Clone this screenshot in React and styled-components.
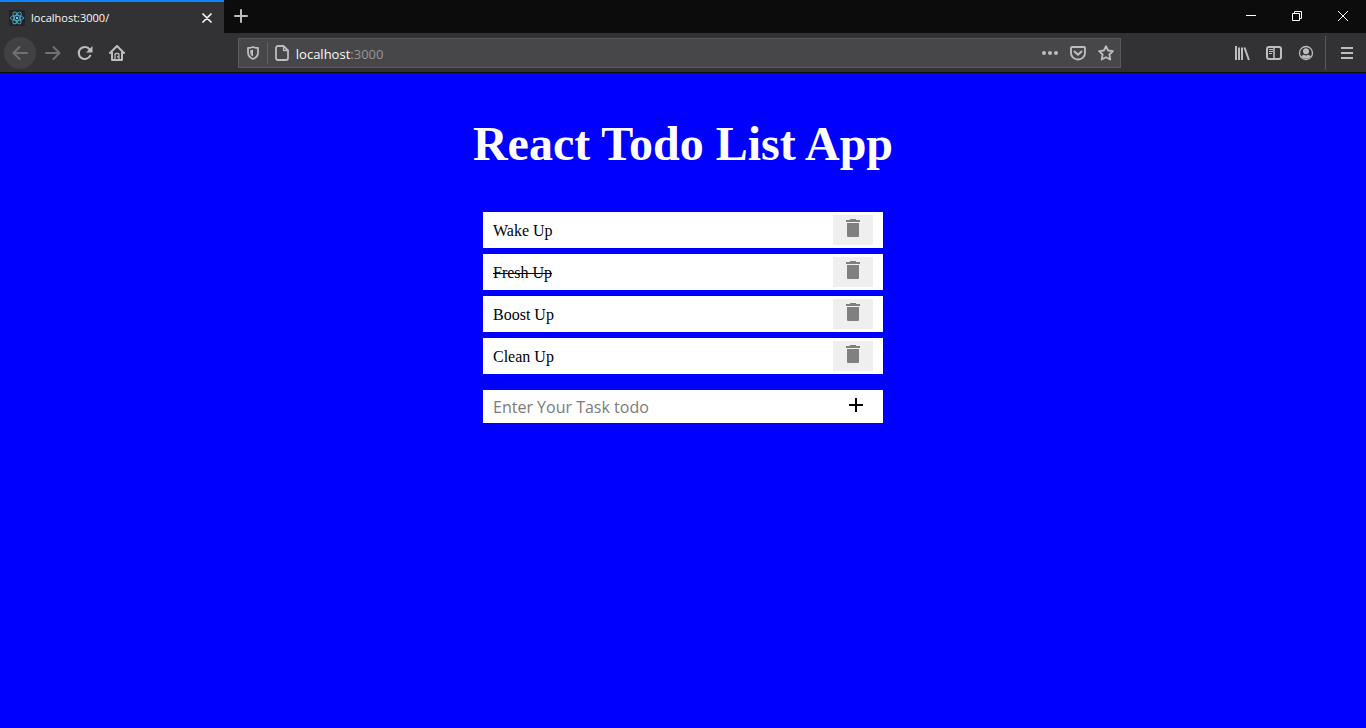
import React from "react";
import styled, { createGlobalStyle } from "styled-components";

const GlobalStyle = createGlobalStyle`
  * { box-sizing: border-box; }
  html, body, #root { height: 100%; }
  body { margin: 0; background: #0000ff; }
  button { border: 0; padding: 0; margin: 0; }
  ul { list-style: none; padding: 0; margin: 0; }
`;

const ui = `"Open Sans", "Noto Sans", sans-serif`;

const Window = styled.div`
  min-height: 100%;
  display: flex;
  flex-direction: column;
`;

const TitleBar = styled.header`
  display: flex;
  height: 33px;
  background: #0c0c0d;
`;

const Tab = styled.div`
  display: flex;
  align-items: center;
  width: 224px;
  padding: 0 8px 0 9px;
  background: #323234;
  border-top: 2px solid #0a84ff;
  color: #f9f9fa;
  font: 11px/16px ${ui};
`;

const TabTitle = styled.span`
  flex: 1;
  margin-left: 6px;
`;

const IconButton = styled.button`
  display: flex;
  flex: none;
  align-items: center;
  justify-content: center;
  width: ${(p) => p.$width || 32}px;
  height: ${(p) => p.$height || 32}px;
  border-radius: ${(p) => (p.$round ? "50%" : "0")};
  background: ${(p) => (p.$round ? "#414143" : "transparent")};
  color: ${(p) => p.$color || "#bdbdbe"};
`;

const WindowControls = styled.div`
  display: flex;
  margin-left: auto;
`;

const Toolbar = styled.nav`
  display: flex;
  align-items: center;
  height: 40px;
  padding: 0 3px 0 4px;
  background: #323234;
  border-bottom: 1px solid #0c0c0d;
`;

const BackSlot = styled.div`
  margin-right: 1px;
`;

const Spacer = styled.div`
  flex: 105 1 0;
`;

const AddressBar = styled.div`
  display: flex;
  flex: 883 1 0;
  min-width: 0;
  align-items: center;
  height: 30px;
  background: #474749;
  border: 1px solid #5a5a5c;
`;

const AddressDivider = styled.span`
  width: 1px;
  height: 22px;
  background: #636365;
`;

const Address = styled.div`
  flex: 1;
  min-width: 0;
  padding-top: 2px;
  color: #96969a;
  font: 13px/20px ${ui};
`;

const Host = styled.span`
  color: #f9f9fa;
`;

const MenuDivider = styled.span`
  width: 1px;
  height: 34px;
  margin: 0 5px 0 3px;
  background: #59595b;
`;

const Page = styled.main`
  flex: 1;
  display: flex;
  flex-direction: column;
  align-items: center;
  padding: 43px 16px 16px;
  background: #0000ff;
  font-family: "Liberation Serif", serif;
`;

const Heading = styled.h1`
  margin: 0 0 41px;
  color: #ffffff;
  font-size: 48px;
  line-height: 55px;
`;

const TodoPanel = styled.section`
  width: 100%;
  max-width: 400px;
`;

const TodoList = styled.ul`
  display: flex;
  flex-direction: column;
  gap: 6px;
`;

const TodoItem = styled.li`
  display: flex;
  align-items: center;
  justify-content: space-between;
  height: 36px;
  padding: 0 10px;
  background: #ffffff;
`;

const TodoText = styled.span`
  padding-top: 2px;
  color: #000000;
  font-size: 16px;
  line-height: 18px;
  text-decoration: ${(p) => (p.$done ? "line-through" : "none")};
`;

const DeleteButton = styled.button`
  display: flex;
  justify-content: center;
  align-items: flex-start;
  width: 40px;
  height: 30px;
  padding-top: 4px;
  background: #efefef;
  color: #808080;
`;

const TodoForm = styled.form`
  display: flex;
  height: 33px;
  margin-top: 16px;
  background: #ffffff;
`;

const TodoInput = styled.input`
  flex: 1;
  min-width: 0;
  padding: 1px 10px 0;
  border: 0;
  outline: 0;
  background: transparent;
  color: #000000;
  font: 16px/20px ${ui};
  &::placeholder { color: #7b7b7b; opacity: 1; }
`;

const AddButton = styled.button`
  display: flex;
  justify-content: center;
  align-items: flex-start;
  width: 40px;
  margin-right: 7px;
  padding-top: 8px;
  background: transparent;
  color: #000000;
`;

const Svg = ({ size = 16, children, ...rest }) => (
  <svg width={size} height={size} viewBox={`0 0 ${size} ${size}`} fill="none"
    stroke="currentColor" strokeWidth="2" strokeLinecap="round"
    strokeLinejoin="round" aria-hidden="true" {...rest}>
    {children}
  </svg>
);

const ReactLogo = () => (
  <Svg stroke="#61dafb" strokeWidth="0.9">
    <rect width="16" height="16" rx="1.5" fill="#20232a" stroke="none" />
    <g opacity="0.75">
      <ellipse cx="8" cy="8" rx="6.6" ry="2.6" />
      <ellipse cx="8" cy="8" rx="6.6" ry="2.6" transform="rotate(60 8 8)" />
      <ellipse cx="8" cy="8" rx="6.6" ry="2.6" transform="rotate(120 8 8)" />
    </g>
    <circle cx="8" cy="8" r="1.2" fill="#61dafb" stroke="none" />
  </Svg>
);

const TabCloseIcon = () => (
  <Svg size={10} strokeWidth="1.7"><path d="M1 1l8 8M9 1L1 9" /></Svg>
);
const NewTabIcon = () => (
  <Svg size={14}><path d="M7 1v12M1 7h12" /></Svg>
);
const MinimizeIcon = () => (
  <Svg size={10} strokeWidth="1" strokeLinecap="butt"><path d="M0 4.5h10" /></Svg>
);
const RestoreIcon = () => (
  <Svg size={10} strokeWidth="1" strokeLinecap="butt" strokeLinejoin="miter">
    <path d="M.5 2.5h7v7h-7zM2.5 2.5v-2h7v7h-2" />
  </Svg>
);
const CloseIcon = () => (
  <Svg size={10} strokeWidth="1" strokeLinecap="butt"><path d="M0 0l10 10M10 0L0 10" /></Svg>
);
const BackIcon = () => (
  <Svg><path d="M15 8H1.5M7.5 2l-6 6 6 6" /></Svg>
);
const ForwardIcon = () => (
  <Svg><path d="M1 8h13.5M8.500 2l6 6-6 6" /></Svg>
);
const ReloadIcon = () => (
  <Svg strokeWidth="2.1">
    <path d="M13.2 10.6a6 6 0 1 1-.6-6.2" />
    <path d="M15.5 1v6.5H9z" fill="currentColor" stroke="none" />
  </Svg>
);
const HomeIcon = () => (
  <Svg>
    <path d="M1 8l7-7 7 7" />
    <path d="M3 7.500V15h10V7.500" />
    <path d="M6 15V9.500a1 1 0 0 1 1-1h2a1 1 0 0 1 1 1V15" strokeWidth="1.300" />
    <rect x="8" y="11" width="1.500" height="1.500" fill="currentColor" stroke="none" />
  </Svg>
);
const ShieldIcon = () => (
  <Svg size={14}>
    <path d="M7 1c1.600.7 3.500 1 5 1v4.500c0 3-1.800 5.200-5 6.500-3.200-1.300-5-3.500-5-6.500V2c1.500 0 3.400-.3 5-1z" strokeWidth="1.800" />
    <path d="M7 3.600v6.800C5.200 9.600 4.300 8.200 4.300 6.400V4.200c1 0 1.900-.2 2.700-.6z" fill="currentColor" stroke="none" />
  </Svg>
);
const PageIcon = () => (
  <Svg>
    <path d="M9.500 1H4A2 2 0 0 0 2 3v10a2 2 0 0 0 2 2h8a2 2 0 0 0 2-2V5.500z" strokeWidth="1.800" />
    <path d="M9.500 1.500v4H14" strokeWidth="1.300" />
  </Svg>
);
const DotsIcon = () => (
  <Svg fill="currentColor" stroke="none">
    <circle cx="2" cy="8" r="2" /><circle cx="8" cy="8" r="2" /><circle cx="14" cy="8" r="2" />
  </Svg>
);
const PocketIcon = () => (
  <Svg>
    <path d="M2 2h12a1 1 0 0 1 1 1v5A7 6.500 0 0 1 1 8V3a1 1 0 0 1 1-1z" strokeWidth="1.900" />
    <path d="M4.500 6.500L8 9.800l3.500-3.300" />
  </Svg>
);
const StarIcon = () => (
  <Svg strokeWidth="1.8">
    <path d="M8 1.200l2.100 4.300 4.800.7-3.500 3.300.9 5L8 12.200l-4.300 2.300.9-5L1.100 6.200l4.800-.7z" />
  </Svg>
);
const LibraryIcon = () => (
  <Svg strokeLinecap="butt">
    <path d="M2 1v14M5 2.500V15M8 2.500V15" />
    <path d="M10.500 2.500L14.900 15" />
  </Svg>
);
const SidebarIcon = () => (
  <Svg>
    <rect x="1" y="2" width="14" height="12" rx="2" />
    <path d="M8 2v12" strokeWidth="1.600" />
    <path d="M3 4.500h4M3 6.500h4M3 8.500h3" strokeWidth="1" strokeLinecap="butt" />
  </Svg>
);
const AccountIcon = () => (
  <Svg>
    <circle cx="8" cy="8" r="6.500" strokeWidth="1.300" />
    <circle cx="8" cy="6.200" r="3" fill="currentColor" stroke="none" />
    <path d="M3.200 11.200c1-.9 2-1.400 2.600-1.500 1.200 1 3.200 1 4.400 0 .6.100 1.600.6 2.600 1.500-1 1.500-2.800 2.300-4.800 2.300s-3.800-.8-4.800-2.300z" fill="currentColor" stroke="none" />
  </Svg>
);
const MenuIcon = () => (
  <Svg size={12} strokeLinecap="butt"><path d="M0 1h12M0 6h12M0 11h12" /></Svg>
);
const TrashIcon = () => (
  <svg width="14" height="19" viewBox="0 0 14 19" fill="currentColor" aria-hidden="true">
    <path d="M0 1h4V0h6v1h4v2H0zM1 4h12v13a1 1 0 0 1-1 1H2a1 1 0 0 1-1-1z" />
  </svg>
);
const PlusIcon = () => (
  <Svg size={14} strokeLinecap="butt"><path d="M7 0v14M0 7h14" /></Svg>
);

const todos = [
  { text: "Wake Up" },
  { text: "Fresh Up", done: true },
  { text: "Boost Up" },
  { text: "Clean Up" },
];

export default function App() {
  return (
    <>
      <GlobalStyle />
      <Window>
        <TitleBar>
          <Tab>
            <ReactLogo />
            <TabTitle>localhost:3000/</TabTitle>
            <IconButton $width={18} $height={18} $color="#f9f9fa" aria-label="Close tab"><TabCloseIcon /></IconButton>
          </Tab>
          <IconButton $width={34} aria-label="New tab"><NewTabIcon /></IconButton>
          <WindowControls>
            <IconButton $width={46} $color="#ffffff" aria-label="Minimize"><MinimizeIcon /></IconButton>
            <IconButton $width={46} $color="#ffffff" aria-label="Restore"><RestoreIcon /></IconButton>
            <IconButton $width={46} $color="#ffffff" aria-label="Close window"><CloseIcon /></IconButton>
          </WindowControls>
        </TitleBar>
        <Toolbar>
          <BackSlot>
            <IconButton $round $color="#707072" aria-label="Back"><BackIcon /></IconButton>
          </BackSlot>
          <IconButton $color="#707072" aria-label="Forward"><ForwardIcon /></IconButton>
          <IconButton aria-label="Reload"><ReloadIcon /></IconButton>
          <IconButton aria-label="Home"><HomeIcon /></IconButton>
          <Spacer />
          <AddressBar>
            <IconButton $width={28} $height={28} aria-label="Tracking protection"><ShieldIcon /></IconButton>
            <AddressDivider />
            <IconButton $width={28} $height={28} aria-label="Site information"><PageIcon /></IconButton>
            <Address><Host>localhost</Host>:3000</Address>
            <IconButton $width={28} $height={28} aria-label="Page actions"><DotsIcon /></IconButton>
            <IconButton $width={28} $height={28} aria-label="Save to Pocket"><PocketIcon /></IconButton>
            <IconButton $width={28} $height={28} aria-label="Bookmark"><StarIcon /></IconButton>
          </AddressBar>
          <Spacer />
          <IconButton aria-label="Library"><LibraryIcon /></IconButton>
          <IconButton aria-label="Sidebars"><SidebarIcon /></IconButton>
          <IconButton aria-label="Account"><AccountIcon /></IconButton>
          <MenuDivider />
          <IconButton aria-label="Menu"><MenuIcon /></IconButton>
        </Toolbar>
        <Page>
          <Heading>React Todo List App</Heading>
          <TodoPanel>
            <TodoList>
              {todos.map((todo) => (
                <TodoItem key={todo.text}>
                  <TodoText $done={todo.done}>{todo.text}</TodoText>
                  <DeleteButton aria-label={`Delete ${todo.text}`}><TrashIcon /></DeleteButton>
                </TodoItem>
              ))}
            </TodoList>
            <TodoForm onSubmit={(e) => e.preventDefault()}>
              <TodoInput aria-label="New task" placeholder="Enter Your Task todo" />
              <AddButton type="submit" aria-label="Add task"><PlusIcon /></AddButton>
            </TodoForm>
          </TodoPanel>
        </Page>
      </Window>
    </>
  );
}
